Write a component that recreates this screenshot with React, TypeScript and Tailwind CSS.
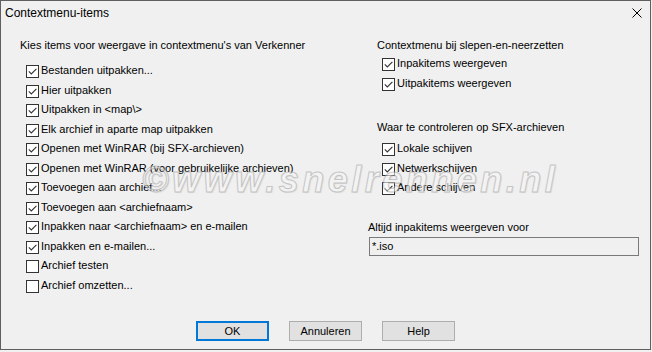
import React from "react";

type Item = { label: string; checked: boolean };

const leftItems: Item[] = [
  { label: "Bestanden uitpakken...", checked: true },
  { label: "Hier uitpakken", checked: true },
  { label: "Uitpakken in <map\\>", checked: true },
  { label: "Elk archief in aparte map uitpakken", checked: true },
  { label: "Openen met WinRAR (bij SFX-archieven)", checked: true },
  { label: "Openen met WinRAR (voor gebruikelijke archieven)", checked: true },
  { label: "Toevoegen aan archief...", checked: true },
  { label: "Toevoegen aan <archiefnaam>", checked: true },
  { label: "Inpakken naar <archiefnaam> en e-mailen", checked: true },
  { label: "Inpakken en e-mailen...", checked: true },
  { label: "Archief testen", checked: false },
  { label: "Archief omzetten...", checked: false },
];

const dragItems: Item[] = [
  { label: "Inpakitems weergeven", checked: true },
  { label: "Uitpakitems weergeven", checked: true },
];

const sfxItems: Item[] = [
  { label: "Lokale schijven", checked: true },
  { label: "Netwerkschijven", checked: true },
  { label: "Andere schijven", checked: true },
];

function Check({ checked }: { checked: boolean }) {
  return (
    <span className="mt-[1px] flex h-[13px] w-[13px] shrink-0 items-center justify-center border border-[#333333] bg-white">
      {checked && (
        <svg width="11" height="11" viewBox="0 0 11 11">
          <path d="M1.8 5.4 L4.3 7.9 L9.4 2.8" fill="none" stroke="#333333" strokeWidth="1.1" />
        </svg>
      )}
    </span>
  );
}

function Row({ item, indent }: { item: Item; indent: string }) {
  return (
    <div className={`flex h-[19.5px] items-start gap-[2px] ${indent}`}>
      <Check checked={item.checked} />
      <span className="whitespace-nowrap leading-[13px]">{item.label}</span>
    </div>
  );
}

function Button({ label, primary }: { label: string; primary?: boolean }) {
  return (
    <button
      className={`flex h-[20px] w-[73px] items-center justify-center bg-[#e1e1e1] leading-[13px] text-black ${
        primary ? "border-2 border-[#0078d7]" : "border border-[#adadad]"
      }`}
    >
      {label}
    </button>
  );
}

export default function App() {
  return (
    <div className="relative h-[352px] w-[652px] bg-[#f0f0f0] font-['Liberation_Sans',Arial,sans-serif] text-[11px] text-black">
      <div className="flex h-[350px] w-[651px] flex-col border border-[#5f5f5f] bg-[#f0f0f0]">
        {/* titelbalk */}
        <div className="flex h-[28px] items-start justify-between pl-[4px] pr-[8px] pt-[5px]">
          <span className="text-[12px] leading-[14px]">Contextmenu-items</span>
          <svg className="mt-[2px]" width="10" height="10" viewBox="0 0 10 10">
            <path d="M0.5 0.5 L9.5 9.5 M9.5 0.5 L0.5 9.5" stroke="#000" strokeWidth="1" />
          </svg>
        </div>

        <div className="flex flex-1 pt-[10px]">
          <div className="w-[367px] pl-[19px]">
            <div className="leading-[13px]">Kies items voor weergave in contextmenu's van Verkenner</div>
            <div className="mt-[12px]">
              {leftItems.map((it) => (
                <Row key={it.label} item={it} indent="pl-[6px]" />
              ))}
            </div>
          </div>

          <div className="flex-1">
            <div className="ml-[9px] leading-[13px]">Contextmenu bij slepen-en-neerzetten</div>
            <div className="mt-[5px]">
              {dragItems.map((it) => (
                <Row key={it.label} item={it} indent="pl-[14px]" />
              ))}
            </div>
            <div className="ml-[9px] mt-[25px] leading-[13px]">Waar te controleren op SFX-archieven</div>
            <div className="mt-[8px]">
              {sfxItems.map((it) => (
                <Row key={it.label} item={it} indent="pl-[14px]" />
              ))}
            </div>
            <div className="mt-[20.5px] leading-[13px]">Altijd inpakitems weergeven voor</div>
            <div className="ml-[1px] mt-[3px] h-[19px] w-[270px] border border-[#7a7a7a] bg-[#f0f0f0] pl-[2px] pt-[1.5px] leading-[13px]">
              *.iso
            </div>
          </div>
        </div>

        <div className="flex justify-center gap-[20px] pb-[8px]">
          <Button label="OK" primary />
          <Button label="Annuleren" />
          <Button label="Help" />
        </div>
      </div>

      {/* watermerk */}
      <span className="pointer-events-none absolute left-[142px] top-[160px] whitespace-nowrap text-[36px] font-bold italic leading-[40px] tracking-[3.5px] text-[#f6f6f6] opacity-60 [-webkit-text-stroke:1px_#a8a8a8] [text-shadow:1px_1px_1px_rgba(0,0,0,0.15)]">
        ©www.snelrennen.nl
      </span>
    </div>
  );
}
